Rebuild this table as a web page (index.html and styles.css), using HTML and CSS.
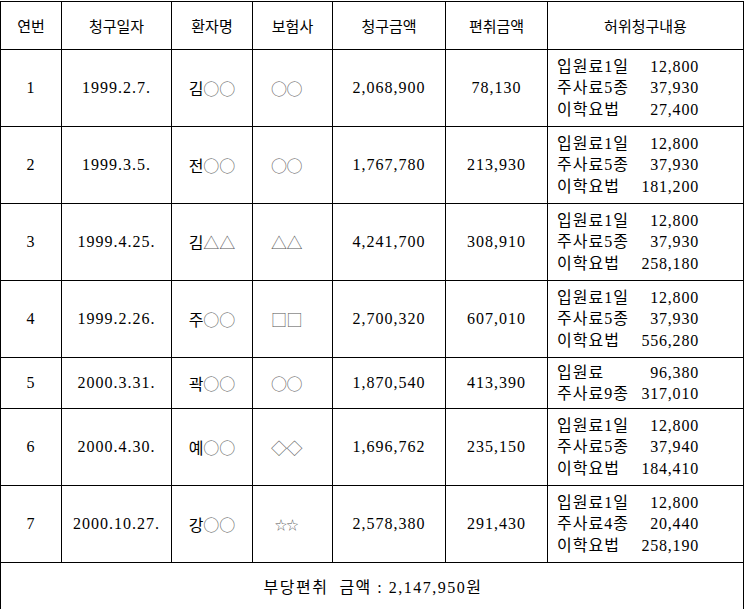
FILE: index.html
```html
<!DOCTYPE html>
<html lang="ko">
<head>
<meta charset="utf-8">
<link rel="stylesheet" href="styles.css">
</head>
<body>
<table class="claims">
  <colgroup>
    <col class="c-no"><col class="c-date"><col class="c-name"><col class="c-ins"><col class="c-amt"><col class="c-fraud"><col class="c-detail">
  </colgroup>
  <thead>
    <tr class="head">
      <th>연번</th><th>청구일자</th><th>환자명</th><th>보험사</th><th>청구금액</th><th>편취금액</th><th>허위청구내용</th>
    </tr>
  </thead>
  <tbody>
    <tr class="tall">
      <td class="num">1</td><td class="num">1999.2.7.</td><td>김<span class="sym">○○</span></td><td class="sym ins">○○</td><td class="num">2,068,900</td><td class="num">78,130</td>
      <td class="detail"><div class="items"><span>입원료1일</span><span>12,800</span><span>주사료5종</span><span>37,930</span><span>이학요법</span><span>27,400</span></div></td>
    </tr>
    <tr class="tall">
      <td class="num">2</td><td class="num">1999.3.5.</td><td>전<span class="sym">○○</span></td><td class="sym ins">○○</td><td class="num">1,767,780</td><td class="num">213,930</td>
      <td class="detail"><div class="items"><span>입원료1일</span><span>12,800</span><span>주사료5종</span><span>37,930</span><span>이학요법</span><span>181,200</span></div></td>
    </tr>
    <tr class="tall">
      <td class="num">3</td><td class="num">1999.4.25.</td><td>김<span class="sym">△△</span></td><td class="sym ins">△△</td><td class="num">4,241,700</td><td class="num">308,910</td>
      <td class="detail"><div class="items"><span>입원료1일</span><span>12,800</span><span>주사료5종</span><span>37,930</span><span>이학요법</span><span>258,180</span></div></td>
    </tr>
    <tr class="tall">
      <td class="num">4</td><td class="num">1999.2.26.</td><td>주<span class="sym">○○</span></td><td class="sym ins">□□</td><td class="num">2,700,320</td><td class="num">607,010</td>
      <td class="detail"><div class="items"><span>입원료1일</span><span>12,800</span><span>주사료5종</span><span>37,930</span><span>이학요법</span><span>556,280</span></div></td>
    </tr>
    <tr class="short">
      <td class="num">5</td><td class="num">2000.3.31.</td><td>곽<span class="sym">○○</span></td><td class="sym ins">○○</td><td class="num">1,870,540</td><td class="num">413,390</td>
      <td class="detail"><div class="items"><span>입원료</span><span>96,380</span><span>주사료9종</span><span>317,010</span></div></td>
    </tr>
    <tr class="tall">
      <td class="num">6</td><td class="num">2000.4.30.</td><td>예<span class="sym">○○</span></td><td class="sym ins">◇◇</td><td class="num">1,696,762</td><td class="num">235,150</td>
      <td class="detail"><div class="items"><span>입원료1일</span><span>12,800</span><span>주사료5종</span><span>37,940</span><span>이학요법</span><span>184,410</span></div></td>
    </tr>
    <tr class="tall">
      <td class="num">7</td><td class="num">2000.10.27.</td><td>강<span class="sym">○○</span></td><td class="sym ins star">☆☆</td><td class="num">2,578,380</td><td class="num">291,430</td>
      <td class="detail"><div class="items"><span>입원료1일</span><span>12,800</span><span>주사료4종</span><span>20,440</span><span>이학요법</span><span>258,190</span></div></td>
    </tr>
  </tbody>
  <tfoot>
    <tr class="foot">
      <td colspan="7">부당편취&nbsp; 금액 :&nbsp;2,147,950원</td>
    </tr>
  </tfoot>
</table>
</body>
</html>
```
FILE: styles.css
```css
html, body {
  margin: 0;
  padding: 0;
  background: #fff;
}
body {
  padding-top: 1px;
  font-family: "Liberation Serif", "Noto Sans CJK KR", serif;
  color: #000;
}
.claims {
  border-collapse: collapse;
  table-layout: fixed;
  width: 743px;
  font-size: 16px;
}
.c-no { width: 61px; }
.c-date { width: 110px; }
.c-name { width: 81px; }
.c-ins { width: 80px; }
.c-amt { width: 113px; }
.c-fraud { width: 102px; }
.c-detail { width: 196px; }
.claims th,
.claims td {
  border: 1px solid #000;
  padding: 0;
  text-align: center;
  vertical-align: middle;
}
.claims th {
  font-family: "Noto Sans CJK KR", sans-serif;
  font-weight: 400;
  font-size: 15px;
}
.head th { height: 47px; }
.tall td { height: 76px; }
.short td { height: 50px; }
.foot td {
  height: 46px;
  letter-spacing: 1.5px;
  font-size: 16px;
  padding-left: 2px;
}
.num {
  letter-spacing: 1px;
}
.sym {
  font-family: "Noto Sans CJK KR", sans-serif;
  color: #555;
  font-weight: 300;
}
.ins {
  padding-right: 12px !important;
  letter-spacing: -0.5px;
}
.star {
  font-size: 12px;
}
.claims td.detail {
  text-align: left;
  padding-left: 9px;
}
.items {
  display: grid;
  grid-template-columns: auto 1fr;
  width: 142px;
  line-height: 21.5px;
  letter-spacing: 1px;
}
.items span:nth-child(even) {
  text-align: right;
  letter-spacing: 0.8px;
}
```
